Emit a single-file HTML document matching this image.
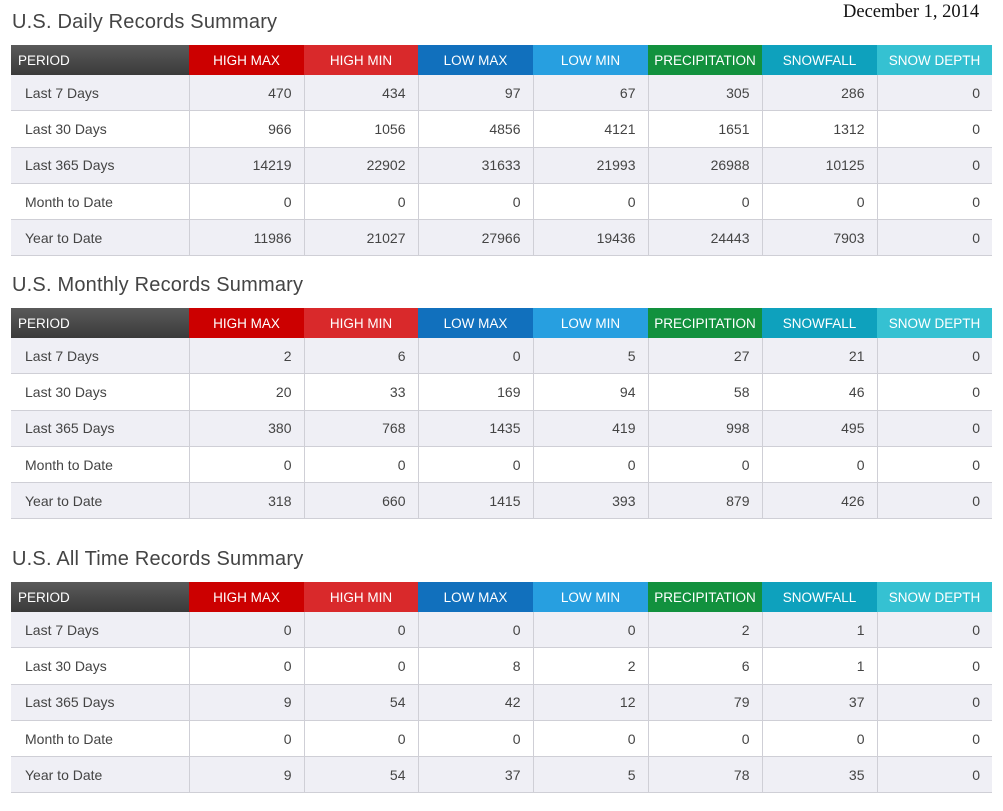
<!DOCTYPE html><html><head><style>
body{margin:0;background:#fff;font-family:"Liberation Sans",sans-serif;width:1003px;height:811px;position:relative;overflow:hidden}
h2{position:absolute;left:12px;margin:0;font-weight:normal;font-size:20px;color:#444;letter-spacing:.2px}
.date{position:absolute;left:843px;top:2px;font-family:"Liberation Serif",serif;font-size:18.5px;color:#111}
table{position:absolute;left:11px;border-collapse:collapse;table-layout:fixed;width:981px;font-size:14px;color:#444}
th{height:30px;padding:0;color:#fff;font-weight:normal;text-align:center;font-size:13.5px}
th.p{text-align:left;padding-left:7px;background:linear-gradient(#5a5a5a,#3a3a3a)}
td{height:35.3px;padding:0 12px 0 14px;text-align:right;border-bottom:1px solid #cfcfd6;border-left:1px solid #cfcfd6}
td:first-child{text-align:left;border-left:none}
tr.s td{background:#efeff5}
</style></head><body>
<div class="date">December 1, 2014</div>

<h2 style="top:11px">U.S. Daily Records Summary</h2>
<table style="top:45px">
<colgroup><col style="width:178px"><col style="width:115px"><col style="width:114px"><col style="width:115px"><col style="width:115px"><col style="width:114px"><col style="width:115px"><col style="width:115px"></colgroup>
<tr><th class="p">PERIOD</th><th style="background:#cc0000">HIGH MAX</th><th style="background:#d9292b">HIGH MIN</th><th style="background:#1170bd">LOW MAX</th><th style="background:#279fe0">LOW MIN</th><th style="background:#12913e">PRECIPITATION</th><th style="background:#0ea1bd">SNOWFALL</th><th style="background:#35c1d2">SNOW DEPTH</th></tr>
<tr class="s"><td>Last 7 Days</td><td>470</td><td>434</td><td>97</td><td>67</td><td>305</td><td>286</td><td>0</td></tr>
<tr><td>Last 30 Days</td><td>966</td><td>1056</td><td>4856</td><td>4121</td><td>1651</td><td>1312</td><td>0</td></tr>
<tr class="s"><td>Last 365 Days</td><td>14219</td><td>22902</td><td>31633</td><td>21993</td><td>26988</td><td>10125</td><td>0</td></tr>
<tr><td>Month to Date</td><td>0</td><td>0</td><td>0</td><td>0</td><td>0</td><td>0</td><td>0</td></tr>
<tr class="s"><td>Year to Date</td><td>11986</td><td>21027</td><td>27966</td><td>19436</td><td>24443</td><td>7903</td><td>0</td></tr>
</table>

<h2 style="top:274px">U.S. Monthly Records Summary</h2>
<table style="top:308px">
<colgroup><col style="width:178px"><col style="width:115px"><col style="width:114px"><col style="width:115px"><col style="width:115px"><col style="width:114px"><col style="width:115px"><col style="width:115px"></colgroup>
<tr><th class="p">PERIOD</th><th style="background:#cc0000">HIGH MAX</th><th style="background:#d9292b">HIGH MIN</th><th style="background:#1170bd">LOW MAX</th><th style="background:#279fe0">LOW MIN</th><th style="background:#12913e">PRECIPITATION</th><th style="background:#0ea1bd">SNOWFALL</th><th style="background:#35c1d2">SNOW DEPTH</th></tr>
<tr class="s"><td>Last 7 Days</td><td>2</td><td>6</td><td>0</td><td>5</td><td>27</td><td>21</td><td>0</td></tr>
<tr><td>Last 30 Days</td><td>20</td><td>33</td><td>169</td><td>94</td><td>58</td><td>46</td><td>0</td></tr>
<tr class="s"><td>Last 365 Days</td><td>380</td><td>768</td><td>1435</td><td>419</td><td>998</td><td>495</td><td>0</td></tr>
<tr><td>Month to Date</td><td>0</td><td>0</td><td>0</td><td>0</td><td>0</td><td>0</td><td>0</td></tr>
<tr class="s"><td>Year to Date</td><td>318</td><td>660</td><td>1415</td><td>393</td><td>879</td><td>426</td><td>0</td></tr>
</table>

<h2 style="top:548px">U.S. All Time Records Summary</h2>
<table style="top:582px">
<colgroup><col style="width:178px"><col style="width:115px"><col style="width:114px"><col style="width:115px"><col style="width:115px"><col style="width:114px"><col style="width:115px"><col style="width:115px"></colgroup>
<tr><th class="p">PERIOD</th><th style="background:#cc0000">HIGH MAX</th><th style="background:#d9292b">HIGH MIN</th><th style="background:#1170bd">LOW MAX</th><th style="background:#279fe0">LOW MIN</th><th style="background:#12913e">PRECIPITATION</th><th style="background:#0ea1bd">SNOWFALL</th><th style="background:#35c1d2">SNOW DEPTH</th></tr>
<tr class="s"><td>Last 7 Days</td><td>0</td><td>0</td><td>0</td><td>0</td><td>2</td><td>1</td><td>0</td></tr>
<tr><td>Last 30 Days</td><td>0</td><td>0</td><td>8</td><td>2</td><td>6</td><td>1</td><td>0</td></tr>
<tr class="s"><td>Last 365 Days</td><td>9</td><td>54</td><td>42</td><td>12</td><td>79</td><td>37</td><td>0</td></tr>
<tr><td>Month to Date</td><td>0</td><td>0</td><td>0</td><td>0</td><td>0</td><td>0</td><td>0</td></tr>
<tr class="s"><td>Year to Date</td><td>9</td><td>54</td><td>37</td><td>5</td><td>78</td><td>35</td><td>0</td></tr>
</table>
</body></html>
